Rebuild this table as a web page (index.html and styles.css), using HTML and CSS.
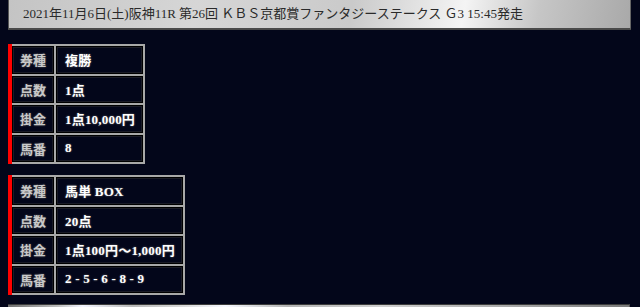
FILE: index.html
```html
<!DOCTYPE html>
<html lang="ja">
<head>
<meta charset="utf-8">
<link rel="stylesheet" href="styles.css">
</head>
<body>
<div class="page">
  <div class="race-header">2021年11月6日(土)阪神11R 第26回 ＫＢＳ京都賞ファンタジーステークス Ｇ3 15:45発走</div>
  <div class="bet">
    <table class="bet-table">
      <tr><th>券種</th><td>複勝</td></tr>
      <tr><th>点数</th><td>1点</td></tr>
      <tr><th>掛金</th><td>1点10,000円</td></tr>
      <tr><th>馬番</th><td>8</td></tr>
    </table>
  </div>
  <div class="bet">
    <table class="bet-table">
      <tr><th>券種</th><td>馬単 BOX</td></tr>
      <tr><th>点数</th><td>20点</td></tr>
      <tr><th>掛金</th><td>1点100円～1,000円</td></tr>
      <tr><th>馬番</th><td>2 - 5 - 6 - 8 - 9</td></tr>
    </table>
  </div>
  <div class="footer-bar"></div>
</div>
</body>
</html>
```

FILE: styles.css
```css
html, body {
  margin: 0;
  padding: 0;
  background: #03061a;
}
.page {
  width: 640px;
  height: 307px;
  overflow: hidden;
  font-family: "Liberation Serif", "Noto Sans CJK JP", serif;
}
.race-header {
  margin: 0 9px 0 8px;
  height: 28px;
  padding-left: 14px;
  line-height: 28px;
  font-size: 13px;
  color: #2a2a2a;
  white-space: nowrap;
  border-left: 1px solid #555;
  border-right: 1px solid #666;
  border-bottom: 2px solid #4a4a4a;
  background: linear-gradient(100deg, #c4c4c4 0%, #d6d6d6 30%, #cacaca 55%, #f4f4f4 73%, #c6c6c6 85%, #a9a9a9 100%);
}
.bet {
  margin: 14px 0 0 8px;
  display: flex;
}
.bet + .bet {
  margin-top: 11px;
}
.bet-table {
  border-collapse: collapse;
  border-left: 4px solid #ff0000;
}
.bet-table th,
.bet-table td {
  height: 27.5px;
  padding-top: 0;
  padding-bottom: 0;
  border: 2px solid #a8a8a8;
  box-shadow: inset 0 0 0 1px #000, inset 0 0 0 2px #1a1b26;
  font-size: 13px;
  font-weight: bold;
  white-space: nowrap;
}
.bet-table th {
  padding-left: 8px;
  padding-right: 8px;
  color: #c8c8c8;
  text-align: center;
  border-left: none;
  text-shadow: 0 0 2px #666;
}
.bet-table td {
  padding-left: 9px;
  padding-right: 8px;
  letter-spacing: 0.2px;
  color: #ffffff;
  text-align: left;
  text-shadow: 0 0 2px #777;
}
.footer-bar {
  margin: 9px 10px 0 8px;
  height: 4px;
  background: linear-gradient(90deg, #707070 0%, #bdbdbd 8%, #f2f4ff 12%, #b8b8b8 20%, #d8d8d8 28%, #f6f8ff 35%, #b4b4b4 45%, #cfcfcf 60%, #aaaaaa 80%, #7a7a7a 100%);
  border-top: 1px solid #3c3c3c;
  border-right: 1px solid #555;
}
```
